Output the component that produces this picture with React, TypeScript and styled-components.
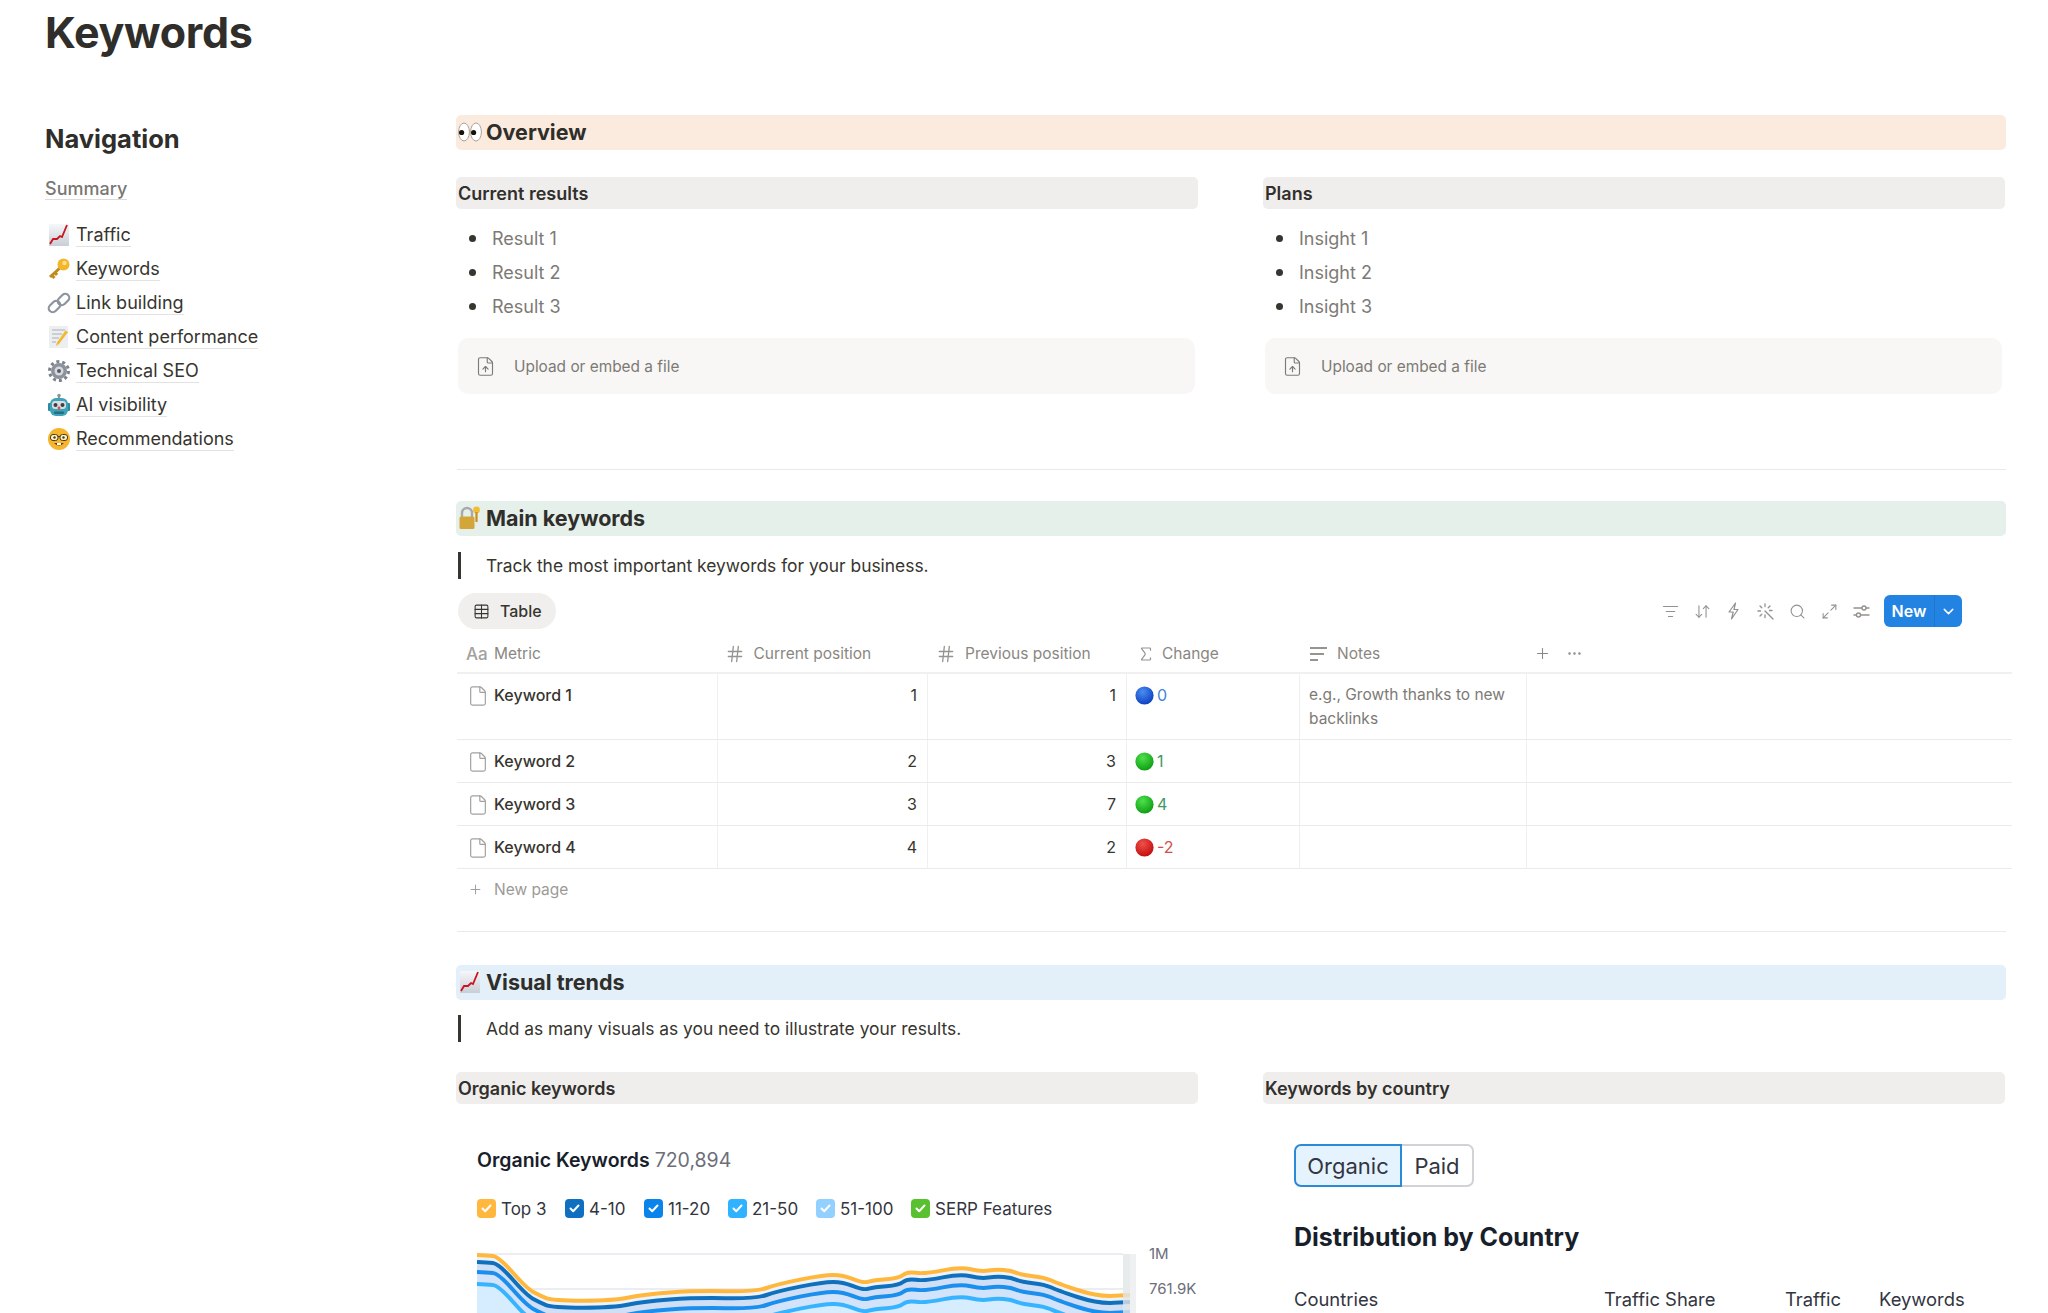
import React from "react"
import styled, { createGlobalStyle } from "styled-components"
import {
  ArrowDownUp,
  ChevronDown,
  Ellipsis,
  File,
  FileUp,
  Hash,
  ListFilter,
  Maximize2,
  Plus,
  Search,
  Sigma,
  Table,
} from "lucide-react"

const GlobalStyle = createGlobalStyle`
  html, body {
    margin: 0;
    padding: 0;
    background: #fff;
  }
  body {
    font-family: Inter, "Liberation Sans", sans-serif;
    color: #2f2e2b;
  }
  * {
    box-sizing: border-box;
  }
`

const Page = styled.div`
  width: 2048px;
  height: 1313px;
  overflow: hidden;
  padding: 8px 42px 0 45px;
`

const Title = styled.h1`
  margin: 0 0 57px;
  font-size: 43px;
  line-height: 48px;
  padding-bottom: 2px;
  font-weight: 700;
  letter-spacing: -0.3px;
  color: #2f2e2b;
`

const Layout = styled.div`
  display: grid;
  grid-template-columns: 411px 1550px;
`

const Sidebar = styled.aside`
  padding-top: 7px;
`

const NavTitle = styled.h2`
  margin: 0 0 23px;
  font-size: 25.5px;
  line-height: 34px;
  font-weight: 700;
`

const SummaryLink = styled.div`
  display: inline-block;
  margin-bottom: 18px;
  font-size: 18px;
  line-height: 20px;
  font-weight: 500;
  color: #787774;
  border-bottom: 1px solid #dcdbd9;
`

const NavList = styled.div`
  display: flex;
  flex-direction: column;
`

const NavRow = styled.div`
  display: flex;
  align-items: center;
  height: 34px;
  padding-left: 2px;
  gap: 5px;
  font-size: 18px;
  font-weight: 400;
`

const NavText = styled.span`
  line-height: 23px;
  color: #37352f;
  border-bottom: 1px solid #e3e2e0;
`

const EmojiBox = styled.svg<{ $size?: number }>`
  flex: none;
  width: ${p => p.$size ?? 24}px;
  height: ${p => p.$size ?? 24}px;
`

const Content = styled.main`
  min-width: 0;
`

const Band = styled.h2<{ $bg: string }>`
  display: flex;
  align-items: center;
  gap: 4px;
  height: 35px;
  margin: 0;
  padding: 0 0 1px 2px;
  border-radius: 5px;
  background: ${p => p.$bg};
  font-size: 21.5px;
  font-weight: 700;
  color: #2f2e2b;
`

const Columns = styled.div<{ $top: number }>`
  display: grid;
  grid-template-columns: 742px 742px;
  column-gap: 65px;
  margin-top: ${p => p.$top}px;
  width: 1549px;
`

const SubBand = styled.h3`
  display: flex;
  align-items: center;
  height: 32px;
  margin: 0;
  padding-left: 2px;
  border-radius: 5px;
  background: #efeeec;
  font-size: 18px;
  font-weight: 600;
  color: #32302c;
`

const Bullets = styled.ul`
  list-style: none;
  margin: 12px 0 15px;
  padding: 0;
`

const Bullet = styled.li`
  display: flex;
  align-items: center;
  height: 34px;
  padding-left: 13px;
  gap: 16px;
  font-size: 18px;
  color: #7d7a75;
  &::before {
    content: "";
    width: 7px;
    height: 7px;
    border-radius: 50%;
    background: #37352f;
  }
`

const Upload = styled.div`
  display: flex;
  align-items: center;
  gap: 18px;
  height: 56px;
  margin: 0 3px 0 2px;
  padding-left: 17px;
  border-radius: 10px;
  background: #f8f7f5;
  font-size: 15.4px;
  color: #7d7a75;
`

const Rule = styled.hr<{ $top: number; $bottom: number }>`
  height: 1px;
  margin: ${p => p.$top}px 0 ${p => p.$bottom}px 1px;
  border: none;
  background: #e9e9e7;
`

const Quote = styled.blockquote<{ $top: number }>`
  display: flex;
  align-items: center;
  height: 27px;
  margin: ${p => p.$top}px 0 0 2px;
  padding-left: 25px;
  border-left: 3px solid #37352f;
  font-size: 17.4px;
  color: #37352f;
`

const Toolbar = styled.div`
  display: flex;
  align-items: center;
  justify-content: space-between;
  height: 36px;
  margin: 14px 0 0 2px;
`

const Pill = styled.div`
  display: flex;
  align-items: center;
  gap: 10px;
  height: 36px;
  padding: 0 14px 0 15px;
  border-radius: 18px;
  background: #f0efed;
  font-size: 16px;
  font-weight: 500;
  color: #37352f;
`

const Tools = styled.div`
  display: flex;
  align-items: center;
  margin-right: 44px;
  color: #93918c;
`

const Tool = styled.span`
  display: flex;
  align-items: center;
  justify-content: center;
  width: 31.8px;
`

const NewButton = styled.div`
  display: flex;
  height: 32px;
  margin-left: 7px;
  border-radius: 6px;
  background: #2383e2;
  color: #fff;
  font-size: 16px;
  font-weight: 600;
`

const NewLabel = styled.span`
  display: flex;
  align-items: center;
  justify-content: center;
  width: 51px;
  border-right: 1px solid #1f76cc;
`

const NewCaret = styled.span`
  display: flex;
  align-items: center;
  justify-content: center;
  width: 27px;
`

const TableHead = styled.div`
  display: grid;
  grid-template-columns: 260.5px 210.5px 199px 173px 227px 1fr;
  height: 45px;
  width: 1555px;
  margin-left: 1px;
  padding-top: 6px;
  border-bottom: 2px solid #f1f0ee;
  font-size: 15.5px;
  color: #8a8782;
`

const HeadCell = styled.div<{ $pad: number; $gap: number }>`
  display: flex;
  align-items: center;
  gap: ${p => p.$gap}px;
  padding-left: ${p => p.$pad}px;
`

const AaMark = styled.span`
  width: 20px;
  font-size: 17px;
  font-weight: 500;
  color: #a3a19c;
`

const Row = styled.div<{ $height: number }>`
  display: grid;
  grid-template-columns: 260.5px 210.5px 199px 173px 227px 1fr;
  height: ${p => p.$height}px;
  width: 1555px;
  margin-left: 1px;
  border-bottom: 1px solid #ebebe9;
  font-size: 16px;
  color: #37352f;
`

const Cell = styled.div`
  display: flex;
  align-items: flex-start;
  padding-top: 9px;
  line-height: 24px;
  border-right: 1px solid #f0f0ee;
  &:last-child {
    border-right: none;
  }
`

const NameCell = styled(Cell)`
  gap: 5px;
  padding-left: 10px;
  font-weight: 500;
  svg {
    margin-top: 2px;
  }
`

const NumberCell = styled(Cell)`
  justify-content: flex-end;
  padding-right: 10px;
`

const ChangeCell = styled(Cell)<{ $color: string }>`
  gap: 3px;
  padding-left: 8px;
  color: ${p => p.$color};
  svg {
    margin-top: 3px;
  }
`

const NoteCell = styled(Cell)`
  padding: 9px 9px 0;
  font-size: 15.5px;
  color: #7d7a75;
`

const NewPage = styled.div`
  display: flex;
  align-items: center;
  gap: 11px;
  height: 40px;
  padding-left: 12px;
  font-size: 15.5px;
  color: #9b9a97;
`

const Chart = styled.div`
  padding: 44px 0 0 21px;
`

const ChartTitle = styled.div`
  font-size: 19.5px;
  line-height: 24px;
  font-weight: 600;
  color: #181e2a;
`

const ChartCount = styled.span`
  font-weight: 400;
  color: #6c6e79;
`

const Legend = styled.div`
  display: flex;
  margin-top: 27px;
  height: 19px;
`

const LegendItem = styled.div<{ $width: number }>`
  display: flex;
  align-items: center;
  gap: 5px;
  width: ${p => p.$width}px;
  font-size: 17px;
  white-space: nowrap;
  color: #333541;
`

const CheckBox = styled.span<{ $color: string }>`
  display: flex;
  align-items: center;
  justify-content: center;
  flex: none;
  width: 19px;
  height: 19px;
  border-radius: 4px;
  background: ${p => p.$color};
`

const Plot = styled.div`
  display: flex;
  gap: 13px;
  margin-top: 27px;
`

const PlotSvg = styled.svg`
  display: block;
  width: 659px;
  height: 68px;
`

const AxisLabels = styled.div`
  display: flex;
  flex-direction: column;
  gap: 17px;
  font-size: 15px;
  line-height: 18px;
  color: #6c6e79;
`

const Country = styled.div`
  padding: 40px 0 0 31px;
`

const Toggle = styled.div`
  display: flex;
  height: 43px;
  width: 180px;
  font-size: 22px;
  color: #333541;
`

const ToggleOption = styled.div<{ $active?: boolean }>`
  display: flex;
  align-items: center;
  justify-content: center;
  border: ${p => (p.$active ? "2px solid #2b8ad6" : "2px solid #d1d1d6")};
  border-left-width: ${p => (p.$active ? 2 : 0)}px;
  border-radius: ${p => (p.$active ? "7px 0 0 7px" : "0 7px 7px 0")};
  background: ${p => (p.$active ? "#e5f3ff" : "#fff")};
  width: ${p => (p.$active ? 108 : 72)}px;
`

const CountryTitle = styled.h3`
  margin: 34px 0 0;
  font-size: 25px;
  line-height: 32px;
  font-weight: 700;
  color: #181e2a;
`

const CountryHead = styled.div`
  display: grid;
  grid-template-columns: 310px 181px 94px 1fr;
  margin-top: 34px;
  font-size: 18.4px;
  line-height: 24px;
  color: #333541;
`

// emoji drawings, there is no colour emoji font on the page
const ChartEmoji = () => (
  <EmojiBox viewBox="0 0 24 24">
    <defs>
      <linearGradient id="chartPaper" x1="0" y1="0" x2="0" y2="1">
        <stop offset="0%" stopColor="#f6f7f9" />
        <stop offset="100%" stopColor="#c9ced6" />
      </linearGradient>
    </defs>
    <rect x="2" y="1" width="20" height="22" fill="url(#chartPaper)" />
    <path d="M3 21 L6 16 L10 16 L13 13 L15 14 L20 2" fill="none" stroke="#c8141c" strokeWidth="1.8" />
  </EmojiBox>
)

const KeyEmoji = () => (
  <EmojiBox viewBox="0 0 24 24">
    <path d="M14 10 L3 20 M5 18.5 L7.5 21 M8 15.5 L10 18" stroke="#c08a1c" strokeWidth="3" fill="none" />
    <circle cx="16.5" cy="7.5" r="6" fill="#f1b62c" />
    <circle cx="17.5" cy="6" r="2.2" fill="#fbe08a" />
  </EmojiBox>
)

const LinkEmoji = () => (
  <EmojiBox viewBox="0 0 24 24">
    <g fill="none" stroke="#8d949e" strokeWidth="2.2">
      <rect x="1" y="11.5" width="13" height="8" rx="4" transform="rotate(-45 7.5 15.5)" />
      <rect x="10" y="4.5" width="13" height="8" rx="4" transform="rotate(-45 16.5 8.5)" />
    </g>
  </EmojiBox>
)

const MemoEmoji = () => (
  <EmojiBox viewBox="0 0 24 24">
    <rect x="2" y="1" width="19" height="22" fill="#eceef0" />
    <path d="M5 5 H18 M5 9 H15 M5 13 H12 M5 17 H9" stroke="#a9adb3" strokeWidth="1.2" />
    <path d="M21 7 L12 19 L9 21 L10 17.5 L18.5 5.5 Z" fill="#f3b82e" />
  </EmojiBox>
)

const GearEmoji = () => (
  <EmojiBox viewBox="0 0 24 24">
    <circle cx="12" cy="12" r="9.5" fill="none" stroke="#7b828b" strokeWidth="3" strokeDasharray="3 2.97" />
    <circle cx="12" cy="12" r="8" fill="#8b929b" />
    <circle cx="12" cy="12" r="4.5" fill="#d6d9dd" />
    <circle cx="12" cy="12" r="2" fill="#555b63" />
  </EmojiBox>
)

const RobotEmoji = () => (
  <EmojiBox viewBox="0 0 24 24">
    <circle cx="12" cy="2.5" r="1.8" fill="#8d949e" />
    <rect x="11" y="3" width="2" height="3" fill="#8d949e" />
    <rect x="1" y="10" width="3" height="8" rx="1" fill="#2b8aa0" />
    <rect x="20" y="10" width="3" height="8" rx="1" fill="#2b8aa0" />
    <rect x="3" y="5" width="18" height="18" rx="6" fill="#3fa3b8" />
    <rect x="5" y="8" width="14" height="8" rx="3" fill="#d8dde2" />
    <circle cx="8.5" cy="12" r="2" fill="#3a3f46" />
    <circle cx="15.5" cy="12" r="2" fill="#3a3f46" />
    <circle cx="12" cy="15" r="1.4" fill="#e04a3f" />
    <rect x="7" y="18.5" width="10" height="2.5" rx="1" fill="#256f80" />
  </EmojiBox>
)

const NerdEmoji = () => (
  <EmojiBox viewBox="0 0 24 24">
    <circle cx="12" cy="12" r="11" fill="#f5b52e" />
    <rect x="3.5" y="7.5" width="7.5" height="6" rx="2.5" fill="#fff3c8" stroke="#4a3a16" strokeWidth="1" />
    <rect x="13" y="7.5" width="7.5" height="6" rx="2.5" fill="#fff3c8" stroke="#4a3a16" strokeWidth="1" />
    <path d="M11 9.5 H13" stroke="#4a3a16" strokeWidth="1" />
    <circle cx="7.5" cy="10.5" r="1.2" fill="#4a3a16" />
    <circle cx="16.5" cy="10.5" r="1.2" fill="#4a3a16" />
    <path d="M7 16 Q12 21 17 16 Z" fill="#6b3a10" />
    <rect x="10" y="16" width="4" height="2" fill="#fff" />
  </EmojiBox>
)

const EyesEmoji = () => (
  <EmojiBox viewBox="0 0 24 24">
    <ellipse cx="6" cy="12" rx="5.4" ry="9" fill="#fff" stroke="#a9a39c" strokeWidth="1" />
    <ellipse cx="18" cy="12" rx="5.4" ry="9" fill="#fff" stroke="#a9a39c" strokeWidth="1" />
    <circle cx="3.6" cy="12.5" r="2.6" fill="#1a1208" />
    <circle cx="15.6" cy="12.5" r="2.6" fill="#1a1208" />
  </EmojiBox>
)

const LockEmoji = () => (
  <EmojiBox viewBox="0 0 24 24">
    <path d="M4 11 V7 a5 5 0 0 1 10 0 V11" fill="none" stroke="#a8a9ab" strokeWidth="2.4" />
    <rect x="1.5" y="10.5" width="15" height="12.5" rx="1.5" fill="#d3a63a" />
    <circle cx="18.5" cy="4" r="3.4" fill="#f0be35" />
    <rect x="17.4" y="6" width="2.2" height="10" fill="#c98f1e" />
  </EmojiBox>
)

const Ball = ({ id, light, dark }: { id: string; light: string; dark: string }) => (
  <EmojiBox $size={19} viewBox="0 0 24 24">
    <defs>
      <radialGradient id={id} cx="40%" cy="30%" r="75%">
        <stop offset="0%" stopColor={light} />
        <stop offset="100%" stopColor={dark} />
      </radialGradient>
    </defs>
    <circle cx="12" cy="12" r="11.5" fill={`url(#${id})`} />
  </EmojiBox>
)

const BarsIcon = () => (
  <svg width="17" height="16" viewBox="0 0 17 16" fill="#96948f">
    <rect x="0" y="1" width="17" height="2" />
    <rect x="0" y="7" width="14" height="2" />
    <rect x="0" y="13" width="8" height="2" />
  </svg>
)

const BoltIcon = () => (
  <svg width="13" height="18" viewBox="0 0 13 18" fill="none" stroke="currentColor" strokeWidth="1.2" strokeLinejoin="round">
    <path d="M8.5 1 L2 10 H6.2 L4.5 17 L11 7.5 H7 Z" />
  </svg>
)

const WandIcon = () => (
  <svg width="17" height="17" viewBox="0 0 17 17" fill="none" stroke="currentColor" strokeWidth="1.3" strokeLinecap="round">
    <path d="M8 8 L16 16" />
    <path d="M8 1 V3.5 M8 12 V14.5 M1 8 H3.5 M12.5 7.5 H15 M3 3 L4.8 4.8 M13 3 L11.2 4.8 M3 13 L4.8 11.2" />
  </svg>
)

const TuneIcon = () => (
  <svg width="17" height="15" viewBox="0 0 17 15" fill="none" stroke="currentColor" strokeWidth="1.4">
    <path d="M0.5 4 H9 M13 4 H16.5 M0.5 11 H3.5 M7.5 11 H16.5" />
    <circle cx="11" cy="4" r="2" />
    <circle cx="5.5" cy="11" r="2" />
  </svg>
)

const CheckMark = () => (
  <svg width="11" height="9" viewBox="0 0 11 9" fill="none" stroke="#fff" strokeWidth="2" strokeLinecap="round" strokeLinejoin="round">
    <path d="M1.5 4.5 L4.2 7.2 L9.5 1.5" />
  </svg>
)

const top3Line: [number, number][] = [
  [0, 10], [10, 10.5], [21.7, 11.7], [49.7, 43.3], [62, 50], [75, 55.7], [136.5, 55.7], [167, 49.3], [218, 45.7],
  [279, 46.7], [300, 39.3], [346, 30], [366, 30], [386.5, 38.3], [396.7, 35], [422, 33.3],
  [430, 26.7], [448, 29], [483.4, 21.7], [504, 26.7], [519, 24.3], [534.4, 25.7], [544.6, 30],
  [567.6, 32.3], [580, 38.3], [621, 51.7], [653, 50],
]

const series = [
  { offset: 0, stroke: "#ffb83d", fill: "#eef3fb" },
  { offset: 7, stroke: "#0f70bd", fill: "#d0dff5" },
  { offset: 17, stroke: "#1b8fee", fill: "#d3e3f9" },
  { offset: 29, stroke: "#36b4ff", fill: "#d6edff" },
]

// rounds the corners of the sampled line through the segment midpoints
const toPath = (offset: number) => {
  const pts = top3Line.map(([x, y]) => [x, y + offset])
  let d = `M${pts[0][0]} ${pts[0][1]}`
  for (let i = 1; i < pts.length - 1; i++) {
    const mx = (pts[i][0] + pts[i + 1][0]) / 2
    const my = (pts[i][1] + pts[i + 1][1]) / 2
    d += ` Q${pts[i][0]} ${pts[i][1]} ${mx} ${my}`
  }
  const last = pts[pts.length - 1]
  return `${d} L${last[0]} ${last[1]}`
}

const legend = [
  { label: "Top 3", color: "#ffb83d", width: 88 },
  { label: "4-10", color: "#0f6fc0", width: 79 },
  { label: "11-20", color: "#0a84ea", width: 84 },
  { label: "21-50", color: "#2fb2ff", width: 88 },
  { label: "51-100", color: "#92d0ff", width: 95 },
  { label: "SERP Features", color: "#59c02f", width: 140 },
]

const navItems = [
  { label: "Traffic", Emoji: ChartEmoji },
  { label: "Keywords", Emoji: KeyEmoji },
  { label: "Link building", Emoji: LinkEmoji },
  { label: "Content performance", Emoji: MemoEmoji },
  { label: "Technical SEO", Emoji: GearEmoji },
  { label: "AI visibility", Emoji: RobotEmoji },
  { label: "Recommendations", Emoji: NerdEmoji },
]

const rows = [
  { name: "Keyword 1", current: 1, previous: 1, change: "0", color: "#3f86d4", light: "#4a8df0", dark: "#0a3cc0", height: 66, note: "e.g., Growth thanks to new backlinks" },
  { name: "Keyword 2", current: 2, previous: 3, change: "1", color: "#3c9a62", light: "#4fe04a", dark: "#0a9a12", height: 43, note: "" },
  { name: "Keyword 3", current: 3, previous: 7, change: "4", color: "#3c9a62", light: "#4fe04a", dark: "#0a9a12", height: 43, note: "" },
  { name: "Keyword 4", current: 4, previous: 2, change: "-2", color: "#d44c47", light: "#f0504a", dark: "#c00a0a", height: 43, note: "" },
]

const tools = [
  <ListFilter size={17} strokeWidth={1.5} />,
  <ArrowDownUp size={17} strokeWidth={1.5} />,
  <BoltIcon />,
  <WandIcon />,
  <Search size={17} strokeWidth={1.5} />,
  <Maximize2 size={17} strokeWidth={1.5} />,
  <TuneIcon />,
]

const PlanColumn = ({ title, items }: { title: string; items: string[] }) => (
  <div>
    <SubBand>{title}</SubBand>
    <Bullets>
      {items.map(item => (
        <Bullet key={item}>{item}</Bullet>
      ))}
    </Bullets>
    <Upload>
      <FileUp size={21} strokeWidth={1.3} />
      Upload or embed a file
    </Upload>
  </div>
)

export default function App() {
  return (
    <Page>
      <GlobalStyle />
      <Title>Keywords</Title>
      <Layout>
        <Sidebar>
          <NavTitle>Navigation</NavTitle>
          <SummaryLink>Summary</SummaryLink>
          <NavList>
            {navItems.map(({ label, Emoji }) => (
              <NavRow key={label}>
                <Emoji />
                <NavText>{label}</NavText>
              </NavRow>
            ))}
          </NavList>
        </Sidebar>

        <Content>
          <Band $bg="#fbebde">
            <EyesEmoji />
            Overview
          </Band>
          <Columns $top={27}>
            <PlanColumn title="Current results" items={["Result 1", "Result 2", "Result 3"]} />
            <PlanColumn title="Plans" items={["Insight 1", "Insight 2", "Insight 3"]} />
          </Columns>
          <Rule $top={75} $bottom={31} />

          <Band $bg="#e6f0ea">
            <LockEmoji />
            Main keywords
          </Band>
          <Quote $top={16}>Track the most important keywords for your business.</Quote>
          <Toolbar>
            <Pill>
              <Table size={17} strokeWidth={1.5} />
              Table
            </Pill>
            <Tools>
              {tools.map((icon, i) => (
                <Tool key={i}>{icon}</Tool>
              ))}
              <NewButton>
                <NewLabel>New</NewLabel>
                <NewCaret>
                  <ChevronDown size={17} strokeWidth={2} />
                </NewCaret>
              </NewButton>
            </Tools>
          </Toolbar>

          <TableHead>
            <HeadCell $pad={9} $gap={8}>
              <AaMark>Aa</AaMark>
              Metric
            </HeadCell>
            <HeadCell $pad={7} $gap={9}>
              <Hash size={20} strokeWidth={1.6} color="#96948f" />
              Current position
            </HeadCell>
            <HeadCell $pad={8} $gap={9}>
              <Hash size={20} strokeWidth={1.6} color="#96948f" />
              Previous position
            </HeadCell>
            <HeadCell $pad={10} $gap={7}>
              <Sigma size={18} strokeWidth={1.6} color="#96948f" />
              Change
            </HeadCell>
            <HeadCell $pad={10} $gap={10}>
              <BarsIcon />
              Notes
            </HeadCell>
            <HeadCell $pad={7} $gap={15}>
              <Plus size={17} strokeWidth={1.5} color="#8a8782" />
              <Ellipsis size={17} strokeWidth={1.5} color="#8a8782" />
            </HeadCell>
          </TableHead>
          {rows.map(row => (
            <Row key={row.name} $height={row.height}>
              <NameCell>
                <File size={22} strokeWidth={1.3} color="#a3a19c" />
                {row.name}
              </NameCell>
              <NumberCell>{row.current}</NumberCell>
              <NumberCell>{row.previous}</NumberCell>
              <ChangeCell $color={row.color}>
                <Ball id={row.name.replace(" ", "")} light={row.light} dark={row.dark} />
                {row.change}
              </ChangeCell>
              <NoteCell>{row.note}</NoteCell>
              <Cell />
            </Row>
          ))}
          <NewPage>
            <Plus size={15} strokeWidth={1.5} />
            New page
          </NewPage>
          <Rule $top={22} $bottom={33} />

          <Band $bg="#e3f0f9">
            <ChartEmoji />
            Visual trends
          </Band>
          <Quote $top={15}>Add as many visuals as you need to illustrate your results.</Quote>

          <Columns $top={30}>
            <div>
              <SubBand>Organic keywords</SubBand>
              <Chart>
                <ChartTitle>
                  Organic Keywords <ChartCount>720,894</ChartCount>
                </ChartTitle>
                <Legend>
                  {legend.map(item => (
                    <LegendItem key={item.label} $width={item.width}>
                      <CheckBox $color={item.color}>
                        <CheckMark />
                      </CheckBox>
                      {item.label}
                    </LegendItem>
                  ))}
                </Legend>
                <Plot>
                  <PlotSvg viewBox="0 0 659 68">
                    <path d="M0 9 H646 M0 44 H646" stroke="#e6e7ee" strokeWidth="1.5" />
                    {series.map(s => (
                      <path key={s.stroke} d={`${toPath(s.offset)} L653 68 L0 68 Z`} fill={s.fill} />
                    ))}
                    {series.map(s => (
                      <path key={s.stroke} d={toPath(s.offset)} fill="none" stroke={s.stroke} strokeWidth="4" strokeLinejoin="round" />
                    ))}
                    <rect x="646" y="9" width="7" height="59" fill="#e2e6e6" fillOpacity="0.8" />
                    <rect x="653" y="9" width="6" height="59" fill="#eef0f1" />
                  </PlotSvg>
                  <AxisLabels>
                    <span>1M</span>
                    <span>761.9K</span>
                  </AxisLabels>
                </Plot>
              </Chart>
            </div>
            <div>
              <SubBand>Keywords by country</SubBand>
              <Country>
                <Toggle>
                  <ToggleOption $active>Organic</ToggleOption>
                  <ToggleOption>Paid</ToggleOption>
                </Toggle>
                <CountryTitle>Distribution by Country</CountryTitle>
                <CountryHead>
                  <span>Countries</span>
                  <span>Traffic Share</span>
                  <span>Traffic</span>
                  <span>Keywords</span>
                </CountryHead>
              </Country>
            </div>
          </Columns>
        </Content>
      </Layout>
    </Page>
  )
}
